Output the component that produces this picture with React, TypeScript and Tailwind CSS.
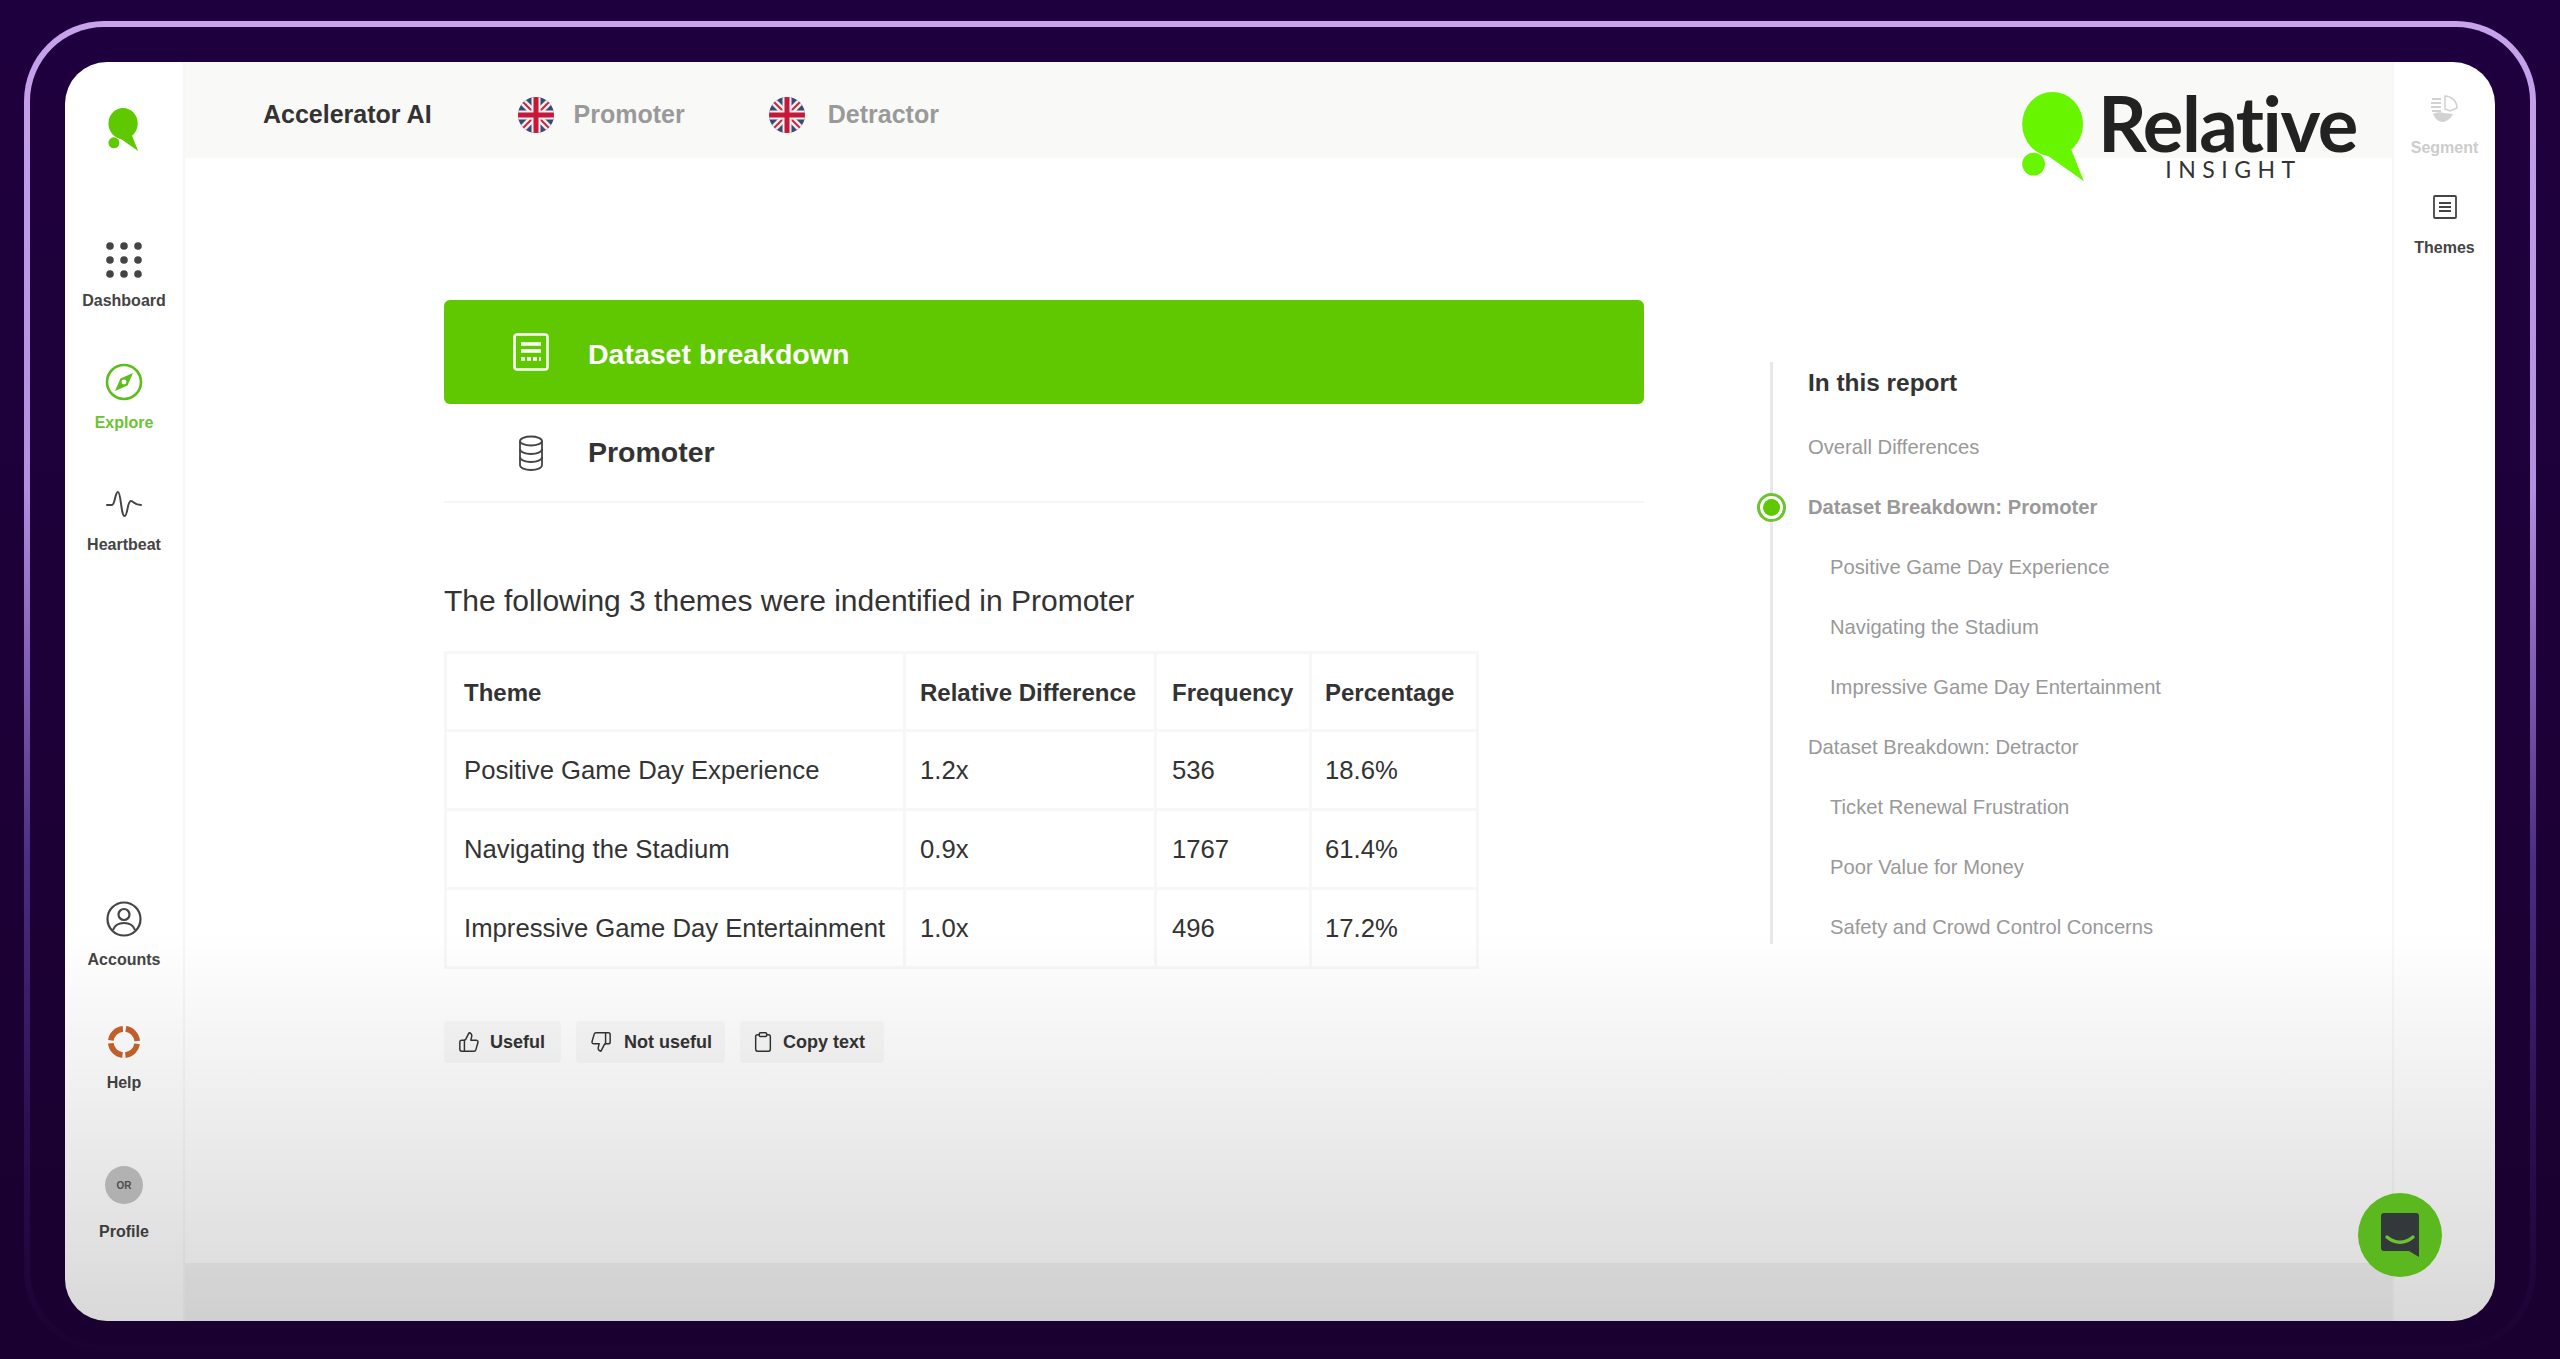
import { ThumbsUp, ThumbsDown, Clipboard } from "lucide-react";

function LogoMark({ className, color }: { className: string; color: string }) {
  return (
    <svg viewBox="0 0 70 100" className={className} fill={color}>
      <ellipse cx="33" cy="36" rx="32" ry="34" />
      <path d="M12 58 L66 96 L50 56 Z" />
      <circle cx="13" cy="78" r="12" />
    </svg>
  );
}

function Flag() {
  return (
    <svg viewBox="0 0 36 36" className="h-[36px] w-[36px] shrink-0">
      <clipPath id="flag-clip">
        <circle cx="18" cy="18" r="18" />
      </clipPath>
      <g clipPath="url(#flag-clip)">
        <rect width="36" height="36" fill="#3b4a73" />
        <path d="M0 0 L36 36 M36 0 L0 36" stroke="#eee" strokeWidth="7" />
        <path d="M0 0 L36 36 M36 0 L0 36" stroke="#c8283f" strokeWidth="2" />
        <path d="M18 0 V36 M0 18 H36" stroke="#eee" strokeWidth="9" />
        <path d="M18 0 V36 M0 18 H36" stroke="#c8183a" strokeWidth="5" />
      </g>
    </svg>
  );
}

function DotsIcon() {
  return (
    <svg viewBox="0 0 36 36" className="h-[36px] w-[36px]" fill="#444">
      {[4, 18, 32].map((y) =>
        [4, 18, 32].map((x) => <circle key={`${x}-${y}`} cx={x} cy={y} r="3.8" />)
      )}
    </svg>
  );
}

function CompassIcon() {
  return (
    <svg viewBox="0 0 38 38" className="h-[38px] w-[38px]" fill="none">
      <circle cx="19" cy="19" r="17" stroke="#5ebd1e" strokeWidth="2.6" />
      <path d="M28 10 L22.5 22.5 L10 28 L15.5 15.5 Z" fill="#5ebd1e" />
      <circle cx="19" cy="19" r="2.4" fill="#fff" />
    </svg>
  );
}

function PulseIcon() {
  return (
    <svg viewBox="0 0 36 26" className="h-[26px] w-[36px]" fill="none" stroke="#444" strokeWidth="2" strokeLinecap="round" strokeLinejoin="round">
      <path d="M1 14 H6 C9 14 9 1 12 1 C15 1 15 25 18.5 25 C22 25 21 10 25 10 C28 10 28 14 35 14" />
    </svg>
  );
}

function UserIcon() {
  return (
    <svg viewBox="0 0 36 36" className="h-[36px] w-[36px]" fill="none" stroke="#444" strokeWidth="2.2">
      <circle cx="18" cy="18" r="16.5" />
      <circle cx="18" cy="13.5" r="5.5" />
      <path d="M7 29 C9 23 13 22 18 22 C23 22 27 23 29 29" />
    </svg>
  );
}

function HelpIcon() {
  return (
    <svg viewBox="0 0 36 36" className="h-[36px] w-[34px]" fill="none" stroke="#c8632d" strokeWidth="6">
      <circle cx="18" cy="18" r="14" strokeDasharray="19 3" strokeDashoffset="9.5" transform="rotate(45 18 18)" />
    </svg>
  );
}

function SheetIcon() {
  return (
    <svg viewBox="0 0 36 38" className="h-[38px] w-[36px]" fill="none" stroke="#fff" strokeWidth="2.6">
      <rect x="1.5" y="1.5" width="33" height="35" rx="2.5" />
      <path d="M8 11 H28 M8 18 H28" strokeWidth="3.6" />
      <path d="M8 26 H28" strokeWidth="3.6" strokeDasharray="4 2" />
    </svg>
  );
}

function DatabaseIcon() {
  return (
    <svg viewBox="0 0 26 36" className="h-[36px] w-[26px]" fill="none" stroke="#444" strokeWidth="1.8">
      <ellipse cx="13" cy="6" rx="11" ry="4.5" />
      <path d="M2 6 V30 C2 33 7 35 13 35 C19 35 24 33 24 30 V6" />
      <path d="M2 14 C2 17 7 19 13 19 C19 19 24 17 24 14" />
      <path d="M2 22 C2 25 7 27 13 27 C19 27 24 25 24 22" />
    </svg>
  );
}

function SegmentIcon() {
  return (
    <svg viewBox="0 0 28 28" className="h-[28px] w-[28px]" fill="none">
      <path d="M1 4 H10 M0 8 H10 M0 12 H10 M1 16 H10" stroke="#d2d2d2" strokeWidth="2" />
      <path d="M14 1 C20 1 26 6 26 13 L19 16 L14 14 Z" stroke="#d2d2d2" strokeWidth="1.6" />
      <path d="M2 19 C6 17 10 17 13 18 L22 19 C19 25 14 27 12 27 C8 27 4 24 2 19 Z" fill="#d2d2d2" />
    </svg>
  );
}

function ThemesIcon() {
  return (
    <svg viewBox="0 0 24 24" className="h-[24px] w-[24px]" fill="none" stroke="#444">
      <rect x="1" y="1" width="22" height="22" rx="1" strokeWidth="1.8" />
      <path d="M6 8 H18 M6 12 H18 M6 16 H18" strokeWidth="2" />
    </svg>
  );
}

function ChatIcon() {
  return (
    <svg viewBox="0 0 38 44" className="h-[44px] w-[38px]">
      <path d="M3 0 H35 C37 0 38 1 38 3 V44 L28 38 H3 C1 38 0 37 0 35 V3 C0 1 1 0 3 0 Z" fill="#33393b" />
      <path d="M6 24 C14 31 24 31 32 24" fill="none" stroke="#6cc332" strokeWidth="3.4" strokeLinecap="round" />
    </svg>
  );
}

const rows = [
  ["Positive Game Day Experience", "1.2x", "536", "18.6%"],
  ["Navigating the Stadium", "0.9x", "1767", "61.4%"],
  ["Impressive Game Day Entertainment", "1.0x", "496", "17.2%"],
];

const toc = [
  { label: "Overall Differences", className: "pl-0 font-normal" },
  { label: "Dataset Breakdown: Promoter", className: "pl-0 font-bold" },
  { label: "Positive Game Day Experience", className: "pl-[22px]" },
  { label: "Navigating the Stadium", className: "pl-[22px]" },
  { label: "Impressive Game Day Entertainment", className: "pl-[22px]" },
  { label: "Dataset Breakdown: Detractor", className: "pl-0" },
  { label: "Ticket Renewal Frustration", className: "pl-[22px]" },
  { label: "Poor Value for Money", className: "pl-[22px]" },
  { label: "Safety and Crowd Control Concerns", className: "pl-[22px]" },
];

function NavItem({
  icon,
  label,
  className,
  labelClass = "mt-[12px] text-[#444]",
}: {
  icon: React.ReactNode;
  label: string;
  className: string;
  labelClass?: string;
}) {
  return (
    <div className={`flex flex-col items-center ${className}`}>
      <div className="flex h-[38px] items-center justify-center">{icon}</div>
      <span className={`text-[16px] leading-[20px] font-bold ${labelClass}`}>{label}</span>
    </div>
  );
}

export default function App() {
  return (
    <div className="h-[1359px] w-full overflow-hidden bg-gradient-to-b from-[#1f003e] to-[#1a0030] pt-[21px] pr-[24px] pl-[24px] font-['Liberation_Sans',sans-serif]">
      <div className="h-[1330px] rounded-[80px] bg-[linear-gradient(to_bottom,#c9a2ec_0%,#b48ee0_35%,#4b2d85_63%,#2b0f50_83%,#1b0032_100%)] p-[6px]">
        <div className="h-full rounded-[74px] bg-gradient-to-b from-[#1f003e] to-[#1a0030] pt-[35px] pr-[35px] pl-[35px]">
          <div className="relative flex h-[1259px] overflow-hidden rounded-[42px] bg-white">
            <aside className="flex w-[120px] shrink-0 flex-col items-center border-r-2 border-[#f7f7f7] pt-[45px]">
              <LogoMark className="h-[46px] w-[32px]" color="#5ec800" />
              <NavItem icon={<DotsIcon />} label="Dashboard" className="mt-[88px]" />
              <NavItem icon={<CompassIcon />} label="Explore" className="mt-[52px]" labelClass="mt-[12px] text-[#6cc332]" />
              <NavItem icon={<PulseIcon />} label="Heartbeat" className="mt-[52px]" />
              <NavItem icon={<UserIcon />} label="Accounts" className="mt-[345px]" />
              <NavItem icon={<HelpIcon />} label="Help" className="mt-[53px]" />
              <NavItem
                icon={<div className="flex h-[38px] w-[38px] items-center justify-center rounded-full bg-[#c4c4c4] text-[10px] font-bold text-[#555]">OR</div>}
                label="Profile"
                className="mt-[73px]"
                labelClass="mt-[18px] text-[#444]"
              />
            </aside>

            <div className="flex min-w-0 flex-1 flex-col">
              <header className="flex h-[96px] shrink-0 items-center bg-[#f9f9f8] pt-[10px] pl-[78px] text-[25px] font-bold">
                <span className="text-[#333]">Accelerator AI</span>
                <div className="ml-[86px] flex items-center gap-[20px] text-[#999]">
                  <Flag />
                  <span>Promoter</span>
                </div>
                <div className="ml-[84px] flex items-center gap-[23px] text-[#999]">
                  <Flag />
                  <span>Detractor</span>
                </div>
              </header>

              <main className="flex flex-1 pt-[142px] pl-[259px]">
                <section className="w-[1200px] shrink-0">
                  <div className="flex h-[104px] items-center rounded-[6px] bg-[#5fc800] pl-[69px] text-[28.5px] font-bold text-white">
                    <SheetIcon />
                    <span className="ml-[39px] pt-[4px]">Dataset breakdown</span>
                  </div>
                  <div className="flex h-[99px] items-center border-b-2 border-[#f5f5f5] pl-[74px] text-[28.5px] font-bold text-[#333]">
                    <DatabaseIcon />
                    <span className="ml-[44px]">Promoter</span>
                  </div>

                  <p className="mt-[80px] text-[30px] leading-[36px] text-[#333]">The following 3 themes were indentified in Promoter</p>

                  <table className="mt-[32px] w-[1032px] table-fixed border-collapse border-[3px] border-[#f7f7f7] text-[25.7px] text-[#333]">
                    <colgroup>
                      <col className="w-[459px]" />
                      <col className="w-[251px]" />
                      <col className="w-[155px]" />
                      <col className="w-[167px]" />
                    </colgroup>
                    <thead>
                      <tr className="h-[78px] text-[24px] font-bold">
                        <th className="border-[3px] border-[#f7f7f7] pt-[2px] pl-[17px] text-left">Theme</th>
                        <th className="border-[3px] border-[#f7f7f7] pt-[2px] pl-[14px] text-left">Relative Difference</th>
                        <th className="border-[3px] border-[#f7f7f7] pt-[2px] pl-[15px] text-left">Frequency</th>
                        <th className="border-[3px] border-[#f7f7f7] pt-[2px] pl-[13px] text-left">Percentage</th>
                      </tr>
                    </thead>
                    <tbody>
                      {rows.map((row) => (
                        <tr key={row[0]} className="h-[79px]">
                          <td className="border-[3px] border-[#f7f7f7] pl-[17px]">{row[0]}</td>
                          <td className="border-[3px] border-[#f7f7f7] pl-[14px]">{row[1]}</td>
                          <td className="border-[3px] border-[#f7f7f7] pl-[15px]">{row[2]}</td>
                          <td className="border-[3px] border-[#f7f7f7] pl-[13px]">{row[3]}</td>
                        </tr>
                      ))}
                    </tbody>
                  </table>

                  <div className="mt-[52px] flex gap-[15px] text-[18px] font-bold text-[#333]">
                    <div className="flex h-[42px] w-[117px] items-center gap-[10px] rounded-[4px] bg-[#f8f8f8] pl-[14px]">
                      <ThumbsUp size={22} strokeWidth={1.6} />
                      <span>Useful</span>
                    </div>
                    <div className="flex h-[42px] w-[149px] items-center gap-[12px] rounded-[4px] bg-[#f8f8f8] pl-[14px]">
                      <ThumbsDown size={22} strokeWidth={1.6} />
                      <span>Not useful</span>
                    </div>
                    <div className="flex h-[42px] w-[144px] items-center gap-[9px] rounded-[4px] bg-[#f8f8f8] pl-[12px]">
                      <Clipboard size={22} strokeWidth={1.6} />
                      <span>Copy text</span>
                    </div>
                  </div>
                </section>

                <nav className="relative mt-[62px] ml-[126px] h-[582px] w-[440px] border-l-[3px] border-[#e8e8e8] pl-[35px] text-[20.2px] text-[#999]">
                  <h2 className="pt-[8px] text-[24.4px] leading-[26px] font-bold text-[#333]">In this report</h2>
                  <ul className="mt-[39px] flex flex-col gap-[36px]">
                    {toc.map((item) => (
                      <li key={item.label} className={`leading-[24px] ${item.className}`}>
                        {item.label}
                      </li>
                    ))}
                  </ul>
                  <div className="absolute top-[131px] left-[-16px] flex h-[29px] w-[29px] items-center justify-center rounded-full border-[3px] border-[#6cc332] bg-white">
                    <div className="h-[17px] w-[17px] rounded-full bg-[#5fc800]" />
                  </div>
                </nav>
              </main>

              <div className="h-[58px] shrink-0 bg-[#f4f4f4]" />
            </div>

            <aside className="flex w-[103px] shrink-0 flex-col items-center border-l-2 border-[#f7f7f7] pt-[33px]">
              <SegmentIcon />
              <span className="mt-[15px] text-[16px] leading-[20px] font-bold text-[#ccc]">Segment</span>
              <div className="mt-[37px]">
                <ThemesIcon />
              </div>
              <span className="mt-[19px] text-[16px] leading-[20px] font-bold text-[#444]">Themes</span>
            </aside>

            <div className="pointer-events-none absolute inset-x-0 bottom-0 h-[391px] bg-gradient-to-b from-black/0 to-black/[.15]" />

            <div className="absolute right-[53px] bottom-[44px] flex h-[84px] w-[84px] items-center justify-center rounded-full bg-[#5cb81f]">
              <ChatIcon />
            </div>

            <div className="absolute top-[28px] left-[1956px] flex items-start">
              <LogoMark className="h-[95px] w-[67px]" color="#68f600" />
              <div className="ml-[10px] flex flex-col items-center font-['Lato',sans-serif] text-[#222]">
                <span className="text-[76px] leading-[66px] font-bold tracking-[-1.5px]">Relative</span>
                <span className="mt-[1px] pl-[12px] text-[23px] leading-[24px] tracking-[6.5px] text-[#333]">INSIGHT</span>
              </div>
            </div>
          </div>
        </div>
      </div>
    </div>
  );
}
